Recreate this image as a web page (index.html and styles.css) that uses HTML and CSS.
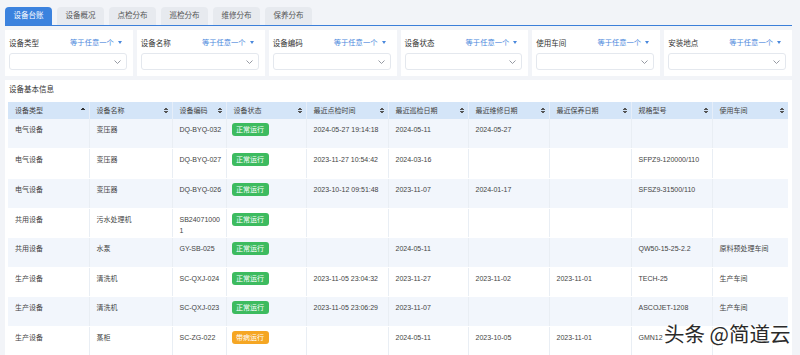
FILE: index.html
```html
<!DOCTYPE html>
<html lang="zh-CN">
<head>
  <meta charset="UTF-8">
  <meta name="viewport" content="width=device-width, initial-scale=1.0">
  <title>设备台账</title>
  <link rel="stylesheet" href="styles.css">
</head>
<body>
  <div class="tabs">
    <div class="tab active">设备台账</div>
    <div class="tab">设备概况</div>
    <div class="tab">点检分布</div>
    <div class="tab">巡检分布</div>
    <div class="tab">维修分布</div>
    <div class="tab">保养分布</div>
  </div>

  <div class="filters">
    <div class="filter">
      <div class="filter-head"><span>设备类型</span><span class="op">等于任意一个<i class="caret"></i></span></div>
      <div class="select"><svg width="7" height="4" viewBox="0 0 7 4"><path d="M0.5 0.5 L3.5 3.5 L6.5 0.5" fill="none" stroke="#8a8f99" stroke-width="0.9"/></svg></div>
    </div>
    <div class="filter">
      <div class="filter-head"><span>设备名称</span><span class="op">等于任意一个<i class="caret"></i></span></div>
      <div class="select"><svg width="7" height="4" viewBox="0 0 7 4"><path d="M0.5 0.5 L3.5 3.5 L6.5 0.5" fill="none" stroke="#8a8f99" stroke-width="0.9"/></svg></div>
    </div>
    <div class="filter">
      <div class="filter-head"><span>设备编码</span><span class="op">等于任意一个<i class="caret"></i></span></div>
      <div class="select"><svg width="7" height="4" viewBox="0 0 7 4"><path d="M0.5 0.5 L3.5 3.5 L6.5 0.5" fill="none" stroke="#8a8f99" stroke-width="0.9"/></svg></div>
    </div>
    <div class="filter">
      <div class="filter-head"><span>设备状态</span><span class="op">等于任意一个<i class="caret"></i></span></div>
      <div class="select"><svg width="7" height="4" viewBox="0 0 7 4"><path d="M0.5 0.5 L3.5 3.5 L6.5 0.5" fill="none" stroke="#8a8f99" stroke-width="0.9"/></svg></div>
    </div>
    <div class="filter">
      <div class="filter-head"><span>使用车间</span><span class="op">等于任意一个<i class="caret"></i></span></div>
      <div class="select"><svg width="7" height="4" viewBox="0 0 7 4"><path d="M0.5 0.5 L3.5 3.5 L6.5 0.5" fill="none" stroke="#8a8f99" stroke-width="0.9"/></svg></div>
    </div>
    <div class="filter">
      <div class="filter-head"><span>安装地点</span><span class="op">等于任意一个<i class="caret"></i></span></div>
      <div class="select"><svg width="7" height="4" viewBox="0 0 7 4"><path d="M0.5 0.5 L3.5 3.5 L6.5 0.5" fill="none" stroke="#8a8f99" stroke-width="0.9"/></svg></div>
    </div>
  </div>

  <div class="card">
    <div class="card-title">设备基本信息</div>
    <table>
      <colgroup>
        <col style="width:81px"><col style="width:83px"><col style="width:54px"><col style="width:80px"><col style="width:82px">
        <col style="width:80px"><col style="width:81px"><col style="width:82px"><col style="width:81px"><col style="width:76px">
      </colgroup>
      <thead>
        <tr>
          <th>设备类型<i class="sort up"></i></th>
          <th>设备名称<i class="sort"></i></th>
          <th>设备编码<i class="sort"></i></th>
          <th>设备状态<i class="sort"></i></th>
          <th>最近点检时间<i class="sort"></i></th>
          <th>最近巡检日期<i class="sort"></i></th>
          <th>最近维修日期<i class="sort"></i></th>
          <th>最近保养日期<i class="sort"></i></th>
          <th>规格型号<i class="sort"></i></th>
          <th>使用车间<i class="sort"></i></th>
        </tr>
      </thead>
      <tbody>
        <tr>
          <td>电气设备</td><td>变压器</td><td class="code">DQ-BYQ-032</td><td><span class="tag ok">正常运行</span></td>
          <td>2024-05-27 19:14:18</td><td>2024-05-11</td><td>2024-05-27</td><td></td><td></td><td></td>
        </tr>
        <tr>
          <td>电气设备</td><td>变压器</td><td class="code">DQ-BYQ-027</td><td><span class="tag ok">正常运行</span></td>
          <td>2023-11-27 10:54:42</td><td>2024-03-16</td><td></td><td></td><td>SFPZ9-120000/110</td><td></td>
        </tr>
        <tr>
          <td>电气设备</td><td>变压器</td><td class="code">DQ-BYQ-026</td><td><span class="tag ok">正常运行</span></td>
          <td>2023-10-12 09:51:48</td><td>2023-11-07</td><td>2024-01-17</td><td></td><td>SFSZ9-31500/110</td><td></td>
        </tr>
        <tr>
          <td>共用设备</td><td>污水处理机</td><td class="code">SB240710001</td><td><span class="tag ok">正常运行</span></td>
          <td></td><td></td><td></td><td></td><td></td><td></td>
        </tr>
        <tr>
          <td>共用设备</td><td>水泵</td><td class="code">GY-SB-025</td><td><span class="tag ok">正常运行</span></td>
          <td></td><td>2024-05-11</td><td></td><td></td><td>QW50-15-25-2.2</td><td>原料预处理车间</td>
        </tr>
        <tr>
          <td>生产设备</td><td>清洗机</td><td class="code">SC-QXJ-024</td><td><span class="tag ok">正常运行</span></td>
          <td>2023-11-05 23:04:32</td><td>2023-11-27</td><td>2023-11-02</td><td>2023-11-01</td><td>TECH-25</td><td>生产车间</td>
        </tr>
        <tr>
          <td>生产设备</td><td>清洗机</td><td class="code">SC-QXJ-023</td><td><span class="tag ok">正常运行</span></td>
          <td>2023-11-05 23:06:29</td><td>2023-11-07</td><td></td><td></td><td>ASCOJET-1208</td><td>生产车间</td>
        </tr>
        <tr>
          <td>生产设备</td><td>蒸柜</td><td class="code">SC-ZG-022</td><td><span class="tag warn">带病运行</span></td>
          <td></td><td>2024-05-11</td><td>2023-10-05</td><td>2023-11-01</td><td>GMN12</td><td></td>
        </tr>
      </tbody>
    </table>
  </div>

  <div class="watermark">头条 @简道云</div>
</body>
</html>
```

FILE: styles.css
```css
body {
  margin: 0;
  background: #f2f4f8;
  font-family: "Liberation Sans", "Noto Sans CJK SC", sans-serif;
  color: #333;
  overflow: hidden;
}
.tabs {
  display: flex;
  gap: 5px;
  margin: 0 8px 0 5px;
  padding-top: 7px;
  border-bottom: 1.5px solid #3b7fd9;
}
.tab {
  width: 47px;
  height: 18px;
  line-height: 18px;
  text-align: center;
  font-size: 7.5px;
  color: #555;
  background: #e7eaef;
  border-radius: 4px 4px 0 0;
}
.tab.active {
  background: #3b82de;
  color: #fff;
}
.filters {
  display: grid;
  grid-template-columns: repeat(6, 1fr);
  gap: 4px;
  margin: 4px 8px 0 5px;
}
.filter {
  background: #fff;
  padding: 6px 6px 6px 4px;
  height: 46px;
  box-sizing: border-box;
}
.filter-head {
  display: flex;
  justify-content: space-between;
  align-items: center;
  height: 12px;
  font-size: 7.5px;
  padding-right: 5px;
}
.op {
  color: #4a88dc;
  font-size: 7.3px;
}
.caret {
  display: inline-block;
  margin-left: 4px;
  border-left: 2.5px solid transparent;
  border-right: 2.5px solid transparent;
  border-top: 3px solid #4a88dc;
  vertical-align: 1px;
}
.select {
  margin-top: 5px;
  height: 17px;
  box-sizing: border-box;
  border: 1px solid #e4e8ee;
  border-radius: 3px;
  display: flex;
  justify-content: flex-end;
  align-items: center;
  padding-right: 5px;
}
.card {
  background: #fff;
  margin: 4px 8px 0 5px;
  padding: 0 4px 0 3px;
  height: 275px;
}
.card-title {
  font-size: 7.5px;
  line-height: 12px;
  padding: 4px 0 5.7px 1px;
}
table {
  width: 780px;
  table-layout: fixed;
  border-collapse: collapse;
  font-size: 7px;
}
th {
  height: 17.6px;
  padding: 0 5px 0 7px;
  background: #d4e5f8;
  color: #444;
  font-weight: normal;
  text-align: left;
  position: relative;
  border-right: 1px solid #e6eef9;
}
td {
  height: 29.6px;
  box-sizing: border-box;
  padding: 5px 5px 0 7px;
  line-height: 11px;
  vertical-align: top;
  color: #444;
  border-right: 1px solid #e9eef4;
  border-bottom: 1px solid #fff;
}
th:last-child, td:last-child {
  border-right: none;
}
tbody tr:nth-child(odd) td {
  background: #f2f6fc;
}
td.code {
  padding-right: 3px;
  word-break: break-all;
}
.sort {
  position: absolute;
  right: 4px;
  top: 50%;
  margin-top: -3.5px;
  width: 4px;
  height: 7px;
  background:
    linear-gradient(to bottom right, transparent 50%, #555 50%) left top / 2px 3px no-repeat,
    linear-gradient(to bottom left, transparent 50%, #555 50%) right top / 2px 3px no-repeat,
    linear-gradient(to top right, transparent 50%, #555 50%) left bottom / 2px 3px no-repeat,
    linear-gradient(to top left, transparent 50%, #555 50%) right bottom / 2px 3px no-repeat;
}
.sort.up {
  background:
    linear-gradient(to bottom right, transparent 50%, #333 50%) left top / 2px 3px no-repeat,
    linear-gradient(to bottom left, transparent 50%, #333 50%) right top / 2px 3px no-repeat;
}
.tag {
  display: inline-block;
  height: 13px;
  line-height: 13px;
  padding: 0 4.5px;
  margin: -1px 0 0 -2px;
  border-radius: 3px;
  color: #fff;
  vertical-align: top;
}
.tag.ok {
  background: #3dbb5f;
}
.tag.warn {
  background: #f5a623;
}
.watermark {
  position: absolute;
  left: 664px;
  top: 322px;
  font-family: "Noto Sans CJK SC", sans-serif;
  font-size: 20.5px;
  line-height: 22px;
  color: #2a2a2a;
  text-shadow: 0 0 2px #fff, 0 0 3px #fff, 0 0 4px #fff;
  white-space: nowrap;
}
```
